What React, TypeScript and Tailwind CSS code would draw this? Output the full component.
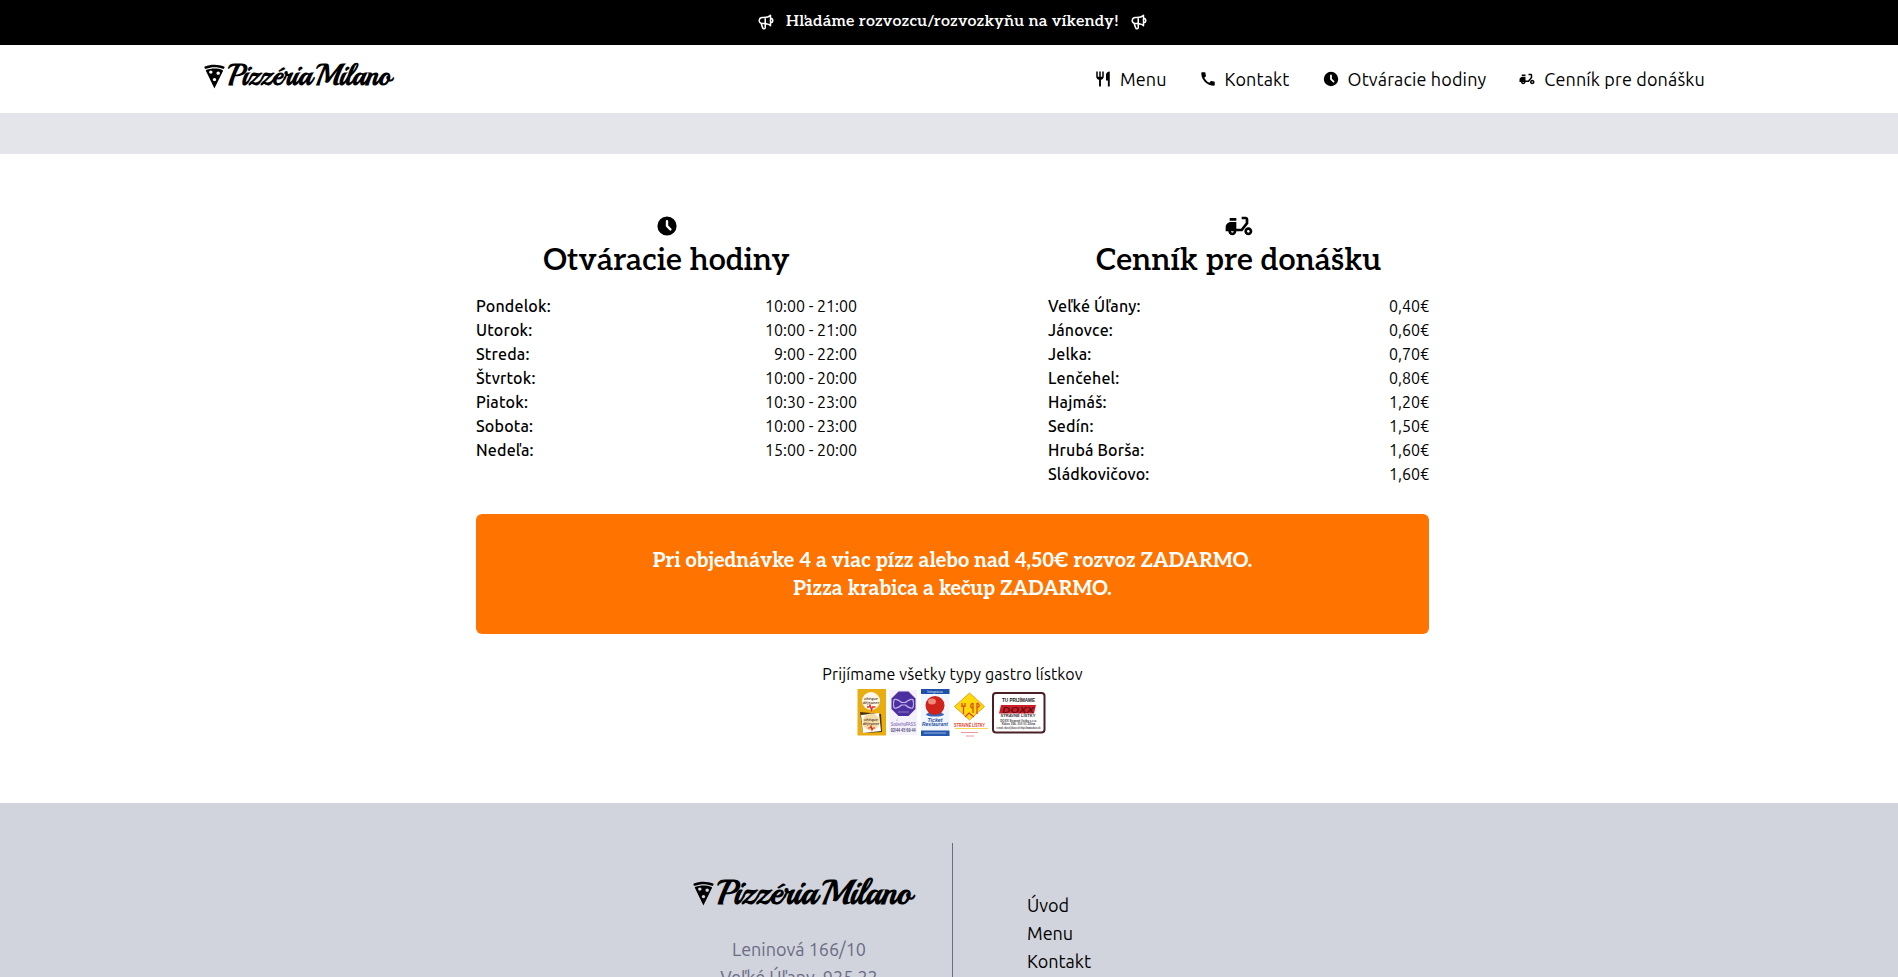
import React from 'react';
import { IoMdPizza } from 'react-icons/io';
import { MdCall, MdMoped, MdRestaurant } from 'react-icons/md';
import { HiClock, HiOutlineSpeakerphone } from 'react-icons/hi';

const hours: [string, string][] = [
  ['Pondelok:', '10:00 - 21:00'],
  ['Utorok:', '10:00 - 21:00'],
  ['Streda:', '9:00 - 22:00'],
  ['Štvrtok:', '10:00 - 20:00'],
  ['Piatok:', '10:30 - 23:00'],
  ['Sobota:', '10:00 - 23:00'],
  ['Nedeľa:', '15:00 - 20:00'],
];

const prices: [string, string][] = [
  ['Veľké Úľany:', '0,40€'],
  ['Jánovce:', '0,60€'],
  ['Jelka:', '0,70€'],
  ['Lenčehel:', '0,80€'],
  ['Hajmáš:', '1,20€'],
  ['Sedín:', '1,50€'],
  ['Hrubá Borša:', '1,60€'],
  ['Sládkovičovo:', '1,60€'],
];

function Logo({ large = false }: { large?: boolean }) {
  return (
    <a className="flex items-center whitespace-nowrap">
      <IoMdPizza className="h-[27px] w-[27px] shrink-0" />
      <span
        className={
          large
            ? "font-['Playball','Lobster',cursive] text-[34px] leading-[40px] font-bold [word-spacing:-6px]"
            : "font-['Playball','Lobster',cursive] text-[28.5px] leading-[34px] font-bold [word-spacing:-5px]"
        }
      >
        Pizzéria Milano
      </span>
    </a>
  );
}

function NavItem({ icon, children }: { icon: React.ReactNode; children: React.ReactNode }) {
  return (
    <a className="flex items-center gap-2 text-lg tracking-[0.14px] whitespace-nowrap">
      <span className="text-[18px]">{icon}</span>
      {children}
    </a>
  );
}

function Table({ icon, title, rows }: { icon: React.ReactNode; title: string; rows: [string, string][] }) {
  return (
    <section className="flex w-[381px] flex-col">
      <span className="flex h-[29px] justify-center text-2xl">{icon}</span>
      <h2 className="text-center font-['Roboto_Slab','Aleo',serif] text-[30.5px] leading-9 font-semibold whitespace-nowrap">
        {title}
      </h2>
      <dl className="mt-[15px]">
        {rows.map(([label, value]) => (
          <div key={label} className="flex justify-between leading-6">
            <dt className="font-medium tracking-[0.18px]">{label}</dt>
            <dd>{value}</dd>
          </div>
        ))}
      </dl>
    </section>
  );
}

function Vouchers() {
  return (
    <svg viewBox="850 685 200 56" className="mr-[5px] h-14 w-[200px]" fontFamily="Liberation Sans, sans-serif" textAnchor="middle">
      <rect x="857.5" y="688" width="28.5" height="46.5" fill="#e9ad12" />
      <circle cx="871" cy="700" r="9" fill="#fff8ea" />
      <g fontSize="4" fontStyle="italic" fontWeight="bold" fill="#5d4633">
        <text x="871" y="698.5">chèque</text>
        <text x="871" y="702.5">déjeuner</text>
      </g>
      <path d="M867 706h2l1-2 1.500 5 1-3h3" stroke="#e0302a" strokeWidth="1.300" fill="none" />
      <path d="M860 711l21 2 1 18-19 1z" fill="#4a3008" />
      <path d="M861 714l18-2 2 18-18 2z" fill="#fff" />
      <circle cx="871" cy="721" r="8.500" fill="#f5dca6" />
      <g fontSize="4" fontStyle="italic" fontWeight="bold" fill="#5d4633">
        <text x="871" y="720">chèque</text>
        <text x="871" y="724">déjeuner</text>
      </g>
      <path d="M868 727h2l1-2 1 4 1-2h2" stroke="#e0302a" strokeWidth="1.200" fill="none" />

      <rect x="889.500" y="689" width="27.500" height="45" fill="#f5f1fb" />
      <path d="M898.500 690.500h10l7 7v10.500l-7 7h-10l-7-7v-10.500z" fill="#4d2fa0" />
      <path d="M901.500 701.500c-3-3-7-4-7.500-2.500s-.5 6 0 7.500 4.500.5 7.500-2.500h4c3 3 7 4 7.500 2.500s.5-6 0-7.500-4.500-.5-7.500 2.500z" fill="none" stroke="#c5b8ee" strokeWidth="1.200" />
      <path d="M898 711h11" stroke="#9a87d2" strokeWidth="0.800" />
      <circle cx="897" cy="719" r="0.600" fill="#8672bc" />
      <text x="903.200" y="725" fontSize="5" fill="#6d57a8" textLength="25" lengthAdjust="spacingAndGlyphs">SodexhoPASS</text>
      <text x="903.200" y="731" fontSize="4.500" fontWeight="bold" fill="#514a77" textLength="25" lengthAdjust="spacingAndGlyphs">02/44 45 69 44</text>

      <rect x="921" y="688" width="28.500" height="47" fill="#f1f5fc" />
      <rect x="921" y="688" width="28.500" height="5" fill="#1f4fa8" />
      <text x="935" y="692" fontSize="3.500" fill="#dfe8fa">Integrácia</text>
      <ellipse cx="935" cy="713.500" rx="9" ry="2" fill="#3568bd" />
      <circle cx="935" cy="704.500" r="9.500" fill="#cf231c" />
      <ellipse cx="932" cy="700.500" rx="4" ry="3" fill="#f08a78" />
      <g fontSize="5.200" fontStyle="italic" fontWeight="bold" fill="#1f4fa0">
        <text x="935" y="720.500">Ticket</text>
        <text x="935" y="725" textLength="26" lengthAdjust="spacingAndGlyphs">Restaurant</text>
      </g>
      <rect x="921" y="729.500" width="28.500" height="5.500" fill="#2457ad" />
      <path d="M924 732h22" stroke="#b8caec" strokeWidth="0.800" />

      <path d="M969.500 692l15 13.500-15 13.500-15-13.500z" fill="#ffd90a" stroke="#e8a21a" strokeWidth="1" />
      <path d="M962 702v4m3-4v4m-3-1h3m-1.500 0v8M973 702v10m0-10c-3 1-3 5 0 5m4-5v11m0-11c3 1 3 4 0 5M965 716l4-4 5 4" stroke="#d9412a" strokeWidth="1.200" fill="none" />
      <text x="969.500" y="726" fontSize="4.600" fontWeight="bold" fill="#e03a25" textLength="31" lengthAdjust="spacingAndGlyphs">STRAVNÉ LÍSTKY</text>
      <path d="M955 727.500h33" stroke="#f2cb2a" strokeWidth="0.800" />
      <path d="M961 731.500h17M966 735h8" stroke="#e79aa2" strokeWidth="1" />

      <rect x="993" y="692" width="51.500" height="39.500" rx="3" fill="#fff" stroke="#4a2026" strokeWidth="2" />
      <text x="1018.500" y="700.500" fontSize="5" fontWeight="bold" fill="#222" textLength="33" lengthAdjust="spacingAndGlyphs">TU PRIJÍMAME</text>
      <path d="M1001 704h35l-2 8.500h-35z" fill="#cf1d28" />
      <text x="1018" y="711.500" fontSize="9" fontWeight="bold" fontStyle="italic" fill="#5e1218" textLength="32" lengthAdjust="spacingAndGlyphs">DOXX</text>
      <text x="1018" y="715.500" fontSize="3.500" fontWeight="bold" fill="#333" textLength="35" lengthAdjust="spacingAndGlyphs">STRAVNÉ LÍSTKY</text>
      <g fontSize="3" fontWeight="bold" fill="#444">
        <text x="1018.500" y="720.500">DOXX Stravné lístky s.r.o.</text>
        <text x="1018.500" y="724">Kálov 356, 010 01 Žilina</text>
        <text x="1018.500" y="727.500" textLength="44" lengthAdjust="spacingAndGlyphs">e-mail: doxx@doxx.sk http://www.doxx.sk</text>
      </g>
    </svg>
  );
}

export default function App() {
  return (
    <div className="flex h-[977px] flex-col overflow-hidden bg-white font-['Ubuntu','Noto_Sans',sans-serif] text-base text-black">
      <div className="flex h-[45px] shrink-0 items-center justify-center gap-[11px] bg-black pb-0.5 pl-[7px] text-white">
        <HiOutlineSpeakerphone className="h-[18px] w-[18px]" />
        <span className="font-['Roboto_Slab','Aleo',serif] text-base font-semibold tracking-[0.2px]">
          Hľadáme rozvozcu/rozvozkyňu na víkendy!
        </span>
        <HiOutlineSpeakerphone className="h-[18px] w-[18px]" />
      </div>

      <header className="flex h-[68px] shrink-0 items-center justify-between pr-[193px] pl-[201px]">
        <div className="pb-1.5">
          <Logo />
        </div>
        <nav className="flex gap-8">
          <NavItem icon={<MdRestaurant />}>Menu</NavItem>
          <NavItem icon={<MdCall />}>Kontakt</NavItem>
          <NavItem icon={<HiClock />}>Otváracie hodiny</NavItem>
          <NavItem icon={<MdMoped />}>Cenník pre donášku</NavItem>
        </nav>
      </header>

      <div className="h-[41px] shrink-0 bg-[#e4e5ea]" />

      <main className="flex h-[649px] shrink-0 justify-center pt-[60px] pl-[7px]">
        <div className="flex w-[953px] flex-col">
          <div className="flex h-[300px] shrink-0 justify-between">
            <Table icon={<HiClock />} title="Otváracie hodiny" rows={hours} />
            <Table icon={<MdMoped className="-mt-1 h-8 w-8" />} title="Cenník pre donášku" rows={prices} />
          </div>
          <div className="flex h-[120px] shrink-0 flex-col items-center justify-center rounded-md bg-[#ff7300] pt-0.5 font-['Roboto_Slab','Aleo',serif] text-xl leading-7 font-bold text-white">
            <p>Pri objednávke 4 a viac pízz alebo nad 4,50€ rozvoz ZADARMO.</p>
            <p>Pizza krabica a kečup ZADARMO.</p>
          </div>
          <div className="mt-7 flex flex-col items-center">
            <p className="leading-6 tracking-[0.13px]">Prijímame všetky typy gastro lístkov</p>
            <Vouchers />
          </div>
        </div>
      </main>

      <footer className="flex grow bg-[#d1d4dc] pt-10">
        <div className="flex w-[953px] flex-col items-end border-r border-[#6b6b85] pt-[30px] pr-[40px]">
          <Logo large />
          <address className="mt-[22px] w-[226px] text-center text-lg leading-7 whitespace-nowrap text-[#6b6b85] not-italic">
            <p>Leninová 166/10</p>
            <p>Veľké Úľany, 925 22</p>
          </address>
        </div>
        <ul className="pt-12 pl-[74px] text-lg leading-7">
          <li>Úvod</li>
          <li>Menu</li>
          <li>Kontakt</li>
        </ul>
      </footer>
    </div>
  );
}
